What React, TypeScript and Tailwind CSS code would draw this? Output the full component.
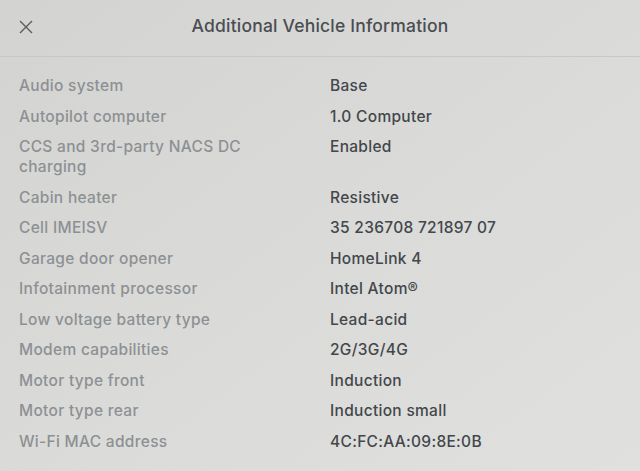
import React from "react";

const ROWS: [string, string][] = [
  ["Audio system", "Base"],
  ["Autopilot computer", "1.0 Computer"],
  ["CCS and 3rd-party NACS DC charging", "Enabled"],
  ["Cabin heater", "Resistive"],
  ["Cell IMEISV", "35 236708 721897 07"],
  ["Garage door opener", "HomeLink 4"],
  ["Infotainment processor", "Intel Atom®"],
  ["Low voltage battery type", "Lead-acid"],
  ["Modem capabilities", "2G/3G/4G"],
  ["Motor type front", "Induction"],
  ["Motor type rear", "Induction small"],
  ["Wi-Fi MAC address", "4C:FC:AA:09:8E:0B"],
];

export default function App() {
  return (
    <div
      className="w-[640px] h-[471px] overflow-hidden bg-gradient-to-br from-[#d3d4d2] via-[#dadbd9] to-[#e0e1de] font-['Inter',sans-serif]"
    >
      {/* Header */}
      <div className="h-[57px] flex items-center relative border-b border-[#c8c9c7]">
        <button className="absolute left-[18px] top-[19px] w-4 h-4 text-[#5a5d60]">
          <svg viewBox="0 0 16 16" className="w-4 h-4" fill="none" stroke="currentColor" strokeWidth="1.4">
            <path d="M2 2 L14 14 M14 2 L2 14" />
          </svg>
        </button>
        <div className="w-full text-center text-[17.5px] font-medium text-[#4a4d51] -mt-[3px] tracking-[0.2px]">
          Additional Vehicle Information
        </div>
      </div>

      {/* Rows */}
      <div className="pt-[19px] px-[19px] flex flex-col gap-[10.5px]">
        {ROWS.map(([label, value]) => (
          <div key={label} className="flex text-[15.5px] leading-[20px] font-medium">
            <div className="w-[311px] pr-[60px] text-[#8d9093] tracking-[0.3px]">{label}</div>
            <div className="text-[#43474b] tracking-[0.3px]">{value}</div>
          </div>
        ))}
      </div>
    </div>
  );
}
